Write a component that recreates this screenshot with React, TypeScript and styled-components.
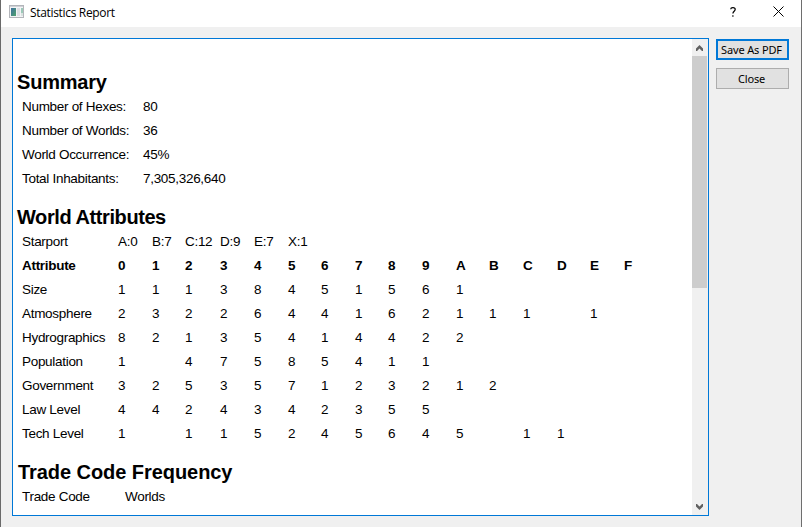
import React from "react";
import styled, { createGlobalStyle } from "styled-components";

const GlobalStyle = createGlobalStyle`
  *, *::before, *::after { box-sizing: border-box; }
  html, body, #root { margin: 0; height: 100%; overflow: hidden; }
`;

const Dialog = styled.div`
  display: flex;
  flex-direction: column;
  width: 802px;
  height: 527px;
  background: #f0f0f0;
  border-left: 1px solid #6a6a6a;
  border-right: 1px solid #6e6e6e;
  color: #000;
`;

const TitleBar = styled.header`
  display: flex;
  align-items: center;
  height: 27px;
  flex: none;
  padding: 0 16px 4px 8px;
  background: #fff;
`;

const Title = styled.h1`
  flex: 1;
  margin: 2px 0 0 6px;
  font: 400 12px/20px "Open Sans", "Noto Sans", sans-serif;
  letter-spacing: -0.33px;
`;

const TitleButton = styled.button`
  display: grid;
  place-items: center;
  width: 14px;
  height: 21px;
  padding: 0;
  margin-left: 31px;
  border: 0;
  background: none;
`;

const Content = styled.main`
  display: flex;
  flex: 1;
  padding: 11px 12px 11px 11px;
  gap: 7px;
`;

const ReportFrame = styled.section`
  display: flex;
  width: 697px;
  height: 478px;
  border: 1px solid #0078d7;
  background: #fff;
  overflow: hidden;
`;

const Report = styled.div`
  flex: 1;
  min-width: 0;
  padding: 31px 0 0 4px;
  overflow: hidden;
  font: 13.5px/25px "Liberation Sans", Arial, sans-serif;
`;

const Heading = styled.h2<{ $spacing?: number; $indent?: number }>`
  height: 24px;
  margin: 0;
  padding-left: ${(p) => p.$indent ?? 0}px;
  font-size: 20px;
  line-height: 25px;
  font-weight: 700;
  letter-spacing: ${(p) => p.$spacing ?? 0}px;
  white-space: nowrap;
`;

const Table = styled.div`
  margin-bottom: 15px;
  padding-left: 5px;
`;

const Row = styled.div<{ $columns: string; $bold?: boolean }>`
  display: grid;
  grid-template-columns: ${(p) => p.$columns};
  height: 24px;
  font-weight: ${(p) => (p.$bold ? 700 : 400)};
  letter-spacing: -0.3px;
  white-space: nowrap;
`;

const Cell = styled.span``;

const ScrollBar = styled.div`
  display: flex;
  flex-direction: column;
  justify-content: space-between;
  width: 16px;
  padding-right: 1px;
  background: #f0f0f0;
`;

const ScrollArrow = styled.div`
  display: grid;
  place-items: center;
  height: 17px;
`;

const Track = styled.div`
  flex: 1;
`;

const Thumb = styled.div`
  height: 232px;
  background: #cdcdcd;
`;

const Actions = styled.aside`
  display: flex;
  flex-direction: column;
  gap: 8px;
  padding-top: 1px;
`;

const PushButton = styled.button<{ $primary?: boolean }>`
  width: 73px;
  height: 21px;
  padding: 0 2px 0 0;
  border: ${(p) => (p.$primary ? "2px solid #0078d7" : "1px solid #adadad")};
  background: #e1e1e1;
  color: #000;
  font: 11px/17px "Noto Sans", sans-serif;
  letter-spacing: -0.15px;
  white-space: nowrap;
`;

const summary: [string, string][] = [
  ["Number of Hexes:", "80"],
  ["Number of Worlds:", "36"],
  ["World Occurrence:", "45%"],
  ["Total Inhabitants:", "7,305,326,640"],
];

const attributes: [string, string[]][] = [
  ["Size", "1 1 1 3 8 4 5 1 5 6 1".split(" ")],
  ["Atmosphere", "2 3 2 2 6 4 4 1 6 2 1 1 1 - 1".split(" ")],
  ["Hydrographics", "8 2 1 3 5 4 1 4 4 2 2".split(" ")],
  ["Population", "1 - 4 7 5 8 5 4 1 1".split(" ")],
  ["Government", "3 2 5 3 5 7 1 2 3 2 1 2".split(" ")],
  ["Law Level", "4 4 2 4 3 4 2 3 5 5".split(" ")],
  ["Tech Level", "1 - 1 1 5 2 4 5 6 4 5 - 1 1".split(" ")],
];

const starports = ["A:0", "B:7", "C:12", "D:9", "E:7", "X:1"];
const digits = "0123456789ABCDEF".split("");
const attributeColumns =
  "96px 34px 33px 35px 34px 34px 33px 34px 33px 34px 34px 33px 34px 34px 33px 34px 34px";

const WindowIcon = () => (
  <svg width="15" height="13" viewBox="0 0 15 13">
    <defs>
      <linearGradient id="pane" x1="0" y1="0" x2="1" y2="1">
        <stop offset="0" stopColor="#3d6f9e" />
        <stop offset="1" stopColor="#4fa36c" />
      </linearGradient>
    </defs>
    <rect width="15" height="13" fill="#b3b5ba" />
    <rect x="1" y="1" width="13" height="1" fill="#cfd1d6" />
    <rect x="1" y="2" width="13" height="10" fill="#f3f4f6" />
    <rect x="2" y="3" width="5" height="8" fill="url(#pane)" />
    <rect x="8" y="3" width="3" height="8" fill="#dcdfe3" />
    <rect x="12" y="3" width="2" height="5" fill="#9cc9b8" />
    <rect x="12" y="8" width="2" height="3" fill="#d9e3e0" />
  </svg>
);

const Chevron = ({ up }: { up?: boolean }) => (
  <svg width="7" height="6" viewBox="0 0 7 6">
    <path
      d={up ? "M0 3.5 3.5 0 7 3.5V6H6L3.5 3.4 1 6H0Z" : "M0 0H1L3.5 2.6 6 0H7V2.5L3.5 6 0 2.5Z"}
      fill="#606060"
    />
  </svg>
);

export default function App() {
  return (
    <>
      <GlobalStyle />
      <Dialog>
        <TitleBar>
          <WindowIcon />
          <Title>Statistics Report</Title>
          <TitleButton aria-label="Help">
            <svg width="6" height="10" viewBox="0 0 6 10">
              <path
                d="M.7 2.2C.8.2 5.2.1 5.2 2.5 5.2 4.2 2.9 4.3 2.9 6.5M2.9 8.3V9.7"
                fill="none"
                stroke="#000"
                strokeWidth="1.2"
              />
            </svg>
          </TitleButton>
          <TitleButton aria-label="Close">
            <svg width="11" height="11" viewBox="0 0 11 11">
              <path d="M.5.5 10.5 10.5M10.5.5.5 10.5" stroke="#000" strokeWidth="1" />
            </svg>
          </TitleButton>
        </TitleBar>
        <Content>
          <ReportFrame>
            <Report>
              <Heading $spacing={-0.2}>Summary</Heading>
              <Table>
                {summary.map(([label, value]) => (
                  <Row key={label} $columns="121px 1fr">
                    <Cell>{label}</Cell>
                    <Cell>{value}</Cell>
                  </Row>
                ))}
              </Table>
              <Heading $spacing={-0.42}>World Attributes</Heading>
              <Table>
                <Row $columns={attributeColumns}>
                  <Cell>Starport</Cell>
                  {starports.map((s) => (
                    <Cell key={s}>{s}</Cell>
                  ))}
                </Row>
                <Row $columns={attributeColumns} $bold>
                  <Cell>Attribute</Cell>
                  {digits.map((d) => (
                    <Cell key={d}>{d}</Cell>
                  ))}
                </Row>
                {attributes.map(([label, values]) => (
                  <Row key={label} $columns={attributeColumns}>
                    <Cell>{label}</Cell>
                    {values.map((v, i) => (
                      <Cell key={i}>{v === "-" ? "" : v}</Cell>
                    ))}
                  </Row>
                ))}
              </Table>
              <Heading $indent={1} $spacing={-0.06}>
                Trade Code Frequency
              </Heading>
              <Table>
                <Row $columns="103px 1fr">
                  <Cell>Trade Code</Cell>
                  <Cell>Worlds</Cell>
                </Row>
              </Table>
            </Report>
            <ScrollBar>
              <ScrollArrow>
                <Chevron up />
              </ScrollArrow>
              <Track>
                <Thumb />
              </Track>
              <ScrollArrow>
                <Chevron />
              </ScrollArrow>
            </ScrollBar>
          </ReportFrame>
          <Actions>
            <PushButton $primary>Save As PDF</PushButton>
            <PushButton>Close</PushButton>
          </Actions>
        </Content>
      </Dialog>
    </>
  );
}
